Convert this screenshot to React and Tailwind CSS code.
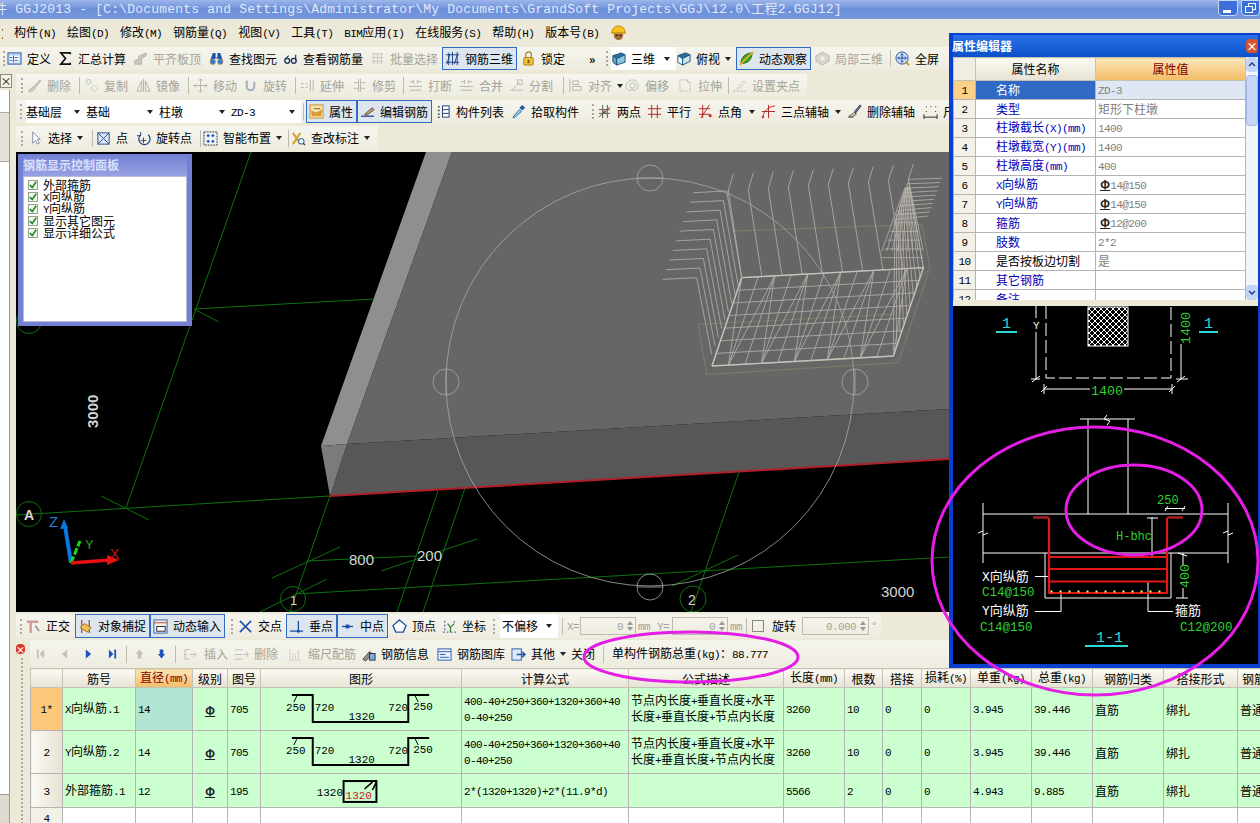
import React from "react";
import clsx from "clsx";

const MONO = "font-['Liberation_Mono','Noto_Sans_CJK_SC',monospace] text-[11px] tracking-[-0.6px]";

// half width latin like the bitmap font of the app
function T({ children }) {
  return String(children)
    .split(/([\x00-\x7f]+)/)
    .filter(Boolean)
    .map((part, i) =>
      /^[\x00-\x7f]+$/.test(part) ? <span key={i} className={MONO}>{part}</span> : <span key={i}>{part}</span>
    );
}

const ICONS = {
  table: <><rect x="1" y="2" width="14" height="12" fill="#bcd4f2" stroke="#2a5caa" /><rect x="3" y="5" width="10" height="7" fill="#fff" /><path d="M7 5v7M8 7h4M8 10h4M3 7h3M3 10h3" stroke="#2a5caa" /></>,
  sigma: <path d="M13 3.5V2H3l5 6-5 6h10v-1.5" fill="none" stroke="#111" strokeWidth="1.8" />,
  slab: <><path d="M2 14V10l4-1V6l8-4v3l-5 3v6z" fill="#c9c8c2" stroke="#b0afa8" /></>,
  binoc: <><path d="M4 2h3v5h2V2h3l3 9h-5V8H6v3H1z" fill="#1c4fa8" /><circle cx="4" cy="11.5" r="3" fill="#3a78d8" stroke="#d8a020" strokeWidth="0.6" /><circle cx="12" cy="11.5" r="3" fill="#3a78d8" stroke="#d8a020" strokeWidth="0.6" /></>,
  glasses: <><circle cx="4.5" cy="10.5" r="2.6" fill="none" stroke="#1a2f60" strokeWidth="1.4" /><circle cx="11.5" cy="10.5" r="2.6" fill="none" stroke="#1a2f60" strokeWidth="1.4" /><path d="M2 9L6 5M13.5 4v6" stroke="#1a2f60" strokeWidth="1.2" /></>,
  batch: <><path d="M2 3h12M2 7h12M2 11h12M4 3v11M8 3v11M12 3v11" stroke="#c8c6bc" /></>,
  cage: <><path d="M1 4h14M1 12h14M4 2v13M8 1v14M13 1v14M2 14L5 4M10 14l3-10" stroke="#1b3f86" fill="none" /></>,
  lock: <><path d="M5 7V4a3 3 0 016 0v3" fill="none" stroke="#a58020" strokeWidth="1.3" /><rect x="3" y="7" width="10" height="8" rx="1" fill="#f2c23c" stroke="#a58020" /><rect x="7" y="9.5" width="2" height="3.5" fill="#7a5a10" /></>,
  cube: <><path d="M2 5l9-3 4 2-9 4z" fill="#2f6f9f" stroke="#1d4f78" /><path d="M2 5l4 3v7l-4-3z" fill="#5fa4cc" stroke="#1d4f78" /><path d="M6 8l9-4v8l-9 3z" fill="#89c4e2" stroke="#1d4f78" /></>,
  cubeTop: <><path d="M2 5l8-3 5 2-8 4z" fill="#2f6f9f" stroke="#1d4f78" /><path d="M2 5l5 3v7l-5-3z" fill="#f4f9fc" stroke="#1d4f78" /><path d="M7 8l8-4v7l-8 4z" fill="#c9e4f3" stroke="#1d4f78" /></>,
  orbit: <><path d="M2 13c0-6 5-11 12-11 0 7-5 12-12 11z" fill="#3ea52e" stroke="#1f6b18" /><path d="M1 15C5 10 9 7 15 1" stroke="#e0b020" strokeWidth="1.8" /></>,
  local: <><path d="M8 1l7 4v6l-7 4-7-4V5z" fill="#d6d4cb" stroke="#bbb" /><circle cx="8" cy="8" r="2.5" fill="#efeee8" /></>,
  zoomAll: <><circle cx="7.5" cy="7.5" r="6.5" fill="#cfe0f6" stroke="#2a4f90" /><path d="M7.5 3v9M3 7.5h9M6 4.5l1.5-1.5L9 4.5M6 10.5L7.5 12 9 10.5M4.5 6L3 7.5 4.5 9M10.5 6L12 7.5 10.5 9" stroke="#1a48a0" fill="none" /><path d="M12 12l3 3" stroke="#c89020" strokeWidth="2" /></>,
  brush: <><path d="M1 15l2-1M2 13l5-4 2 2-5 4zM8 8l6-6 1 1-6 7z" fill="#cfcdc4" stroke="#b8b6ac" /></>,
  copy: <><circle cx="5" cy="4" r="2.5" fill="none" stroke="#bbb" /><circle cx="11" cy="11" r="3" fill="none" stroke="#bbb" strokeDasharray="2 1" /></>,
  mirror: <><path d="M1 14L6 3v11zM15 14L10 3v11z" fill="none" stroke="#b4b2a8" /><path d="M8 1v14" stroke="#b4b2a8" /></>,
  move: <path d="M8 1v14M1 8h14M8 1L6 3M8 1l2 2M8 15l-2-2M8 15l2-2M1 8l2-2M1 8l2 2M15 8l-2-2M15 8l-2 2" fill="none" stroke="#b4b2a8" />,
  rotate: <><path d="M4 4v5a4 4 0 008 0V4" fill="none" stroke="#a9b3c4" strokeWidth="2.4" /><path d="M2 5h4L4 2z" fill="#a9b3c4" /></>,
  extend: <path d="M1 6h3M1 10h3M6 6h2M6 10h2M11 2v12M14 2v12" fill="none" stroke="#b4b2a8" />,
  trim: <path d="M2 5h4M2 11h4M10 5h4M10 11h4M7 1v14M9 1v14" fill="none" stroke="#b4b2a8" />,
  breakIc: <path d="M2 4h4M10 4h4M6 2v4M10 2v4M1 9h14M2 13h12" fill="none" stroke="#b4b2a8" />,
  split: <><path d="M1 13h14M3 13l9-9" stroke="#bbb" /><rect x="9" y="2" width="5" height="5" fill="none" stroke="#bbb" /></>,
  align: <path d="M2 1v14M5 3h6v4H5zM5 9h9v4H5z" fill="none" stroke="#b4b2a8" />,
  offset: <><path d="M8 2a6 6 0 016 6c0 3-2 5-4 5H5c-2 0-4-2-4-4a7 7 0 017-7z" fill="none" stroke="#bbb" /><circle cx="8" cy="8" r="3" fill="none" stroke="#bbb" /></>,
  stretch: <path d="M2 2h8l3 3v9H2zM10 2v3h3" fill="none" stroke="#bbb" strokeDasharray="2 1" />,
  grip: <path d="M1 14h14M5 12l7-9 2 2-7 7" fill="none" stroke="#bbb" strokeDasharray="3 1" />,
  prop: <><rect x="1" y="1" width="14" height="14" fill="#f9e4b0" stroke="#c88d2e" /><path d="M2 7l6 2 6-3-1 7H3z" fill="#d59a34" /><path d="M5 5h7" stroke="#8a5a1a" /></>,
  edit: <><path d="M1 13h14" stroke="#1f3f7a" strokeWidth="1.3" /><path d="M5 11l8-7 2 2-8 6z" fill="#d9a868" stroke="#444" /></>,
  list: <><path d="M2 3h2M2 7h2M2 11h2M2 14h2" stroke="#555" strokeWidth="1.6" /><rect x="7" y="2" width="7" height="12" fill="#fff" stroke="#1d3d7a" /><path d="M7 6h7M7 10h7" stroke="#1d3d7a" /></>,
  pick: <><path d="M2 14l7-8 2 2-8 7z" fill="#a9d8f4" stroke="#1b5fa0" /><path d="M9 4l3-3 3 3-3 3z" fill="#1b5fa0" /></>,
  twoPt: <><path d="M2 6h12M2 10h12M6 1v14M11 1v14" fill="none" stroke="#555" /><path d="M2 14L14 3" stroke="#8a4a20" /><circle cx="8" cy="8.5" r="1.4" fill="#8a4a20" /></>,
  parallel: <path d="M1 5h14M1 11h14M5 1v14M11 1v14" stroke="#b02020" />,
  angle: <><path d="M1 5h12M1 11h12M5 1v14M12 1L3 15" stroke="#b02020" fill="none" /><circle cx="13" cy="12.5" r="1.6" fill="#d02020" /></>,
  threePt: <><path d="M2 14C3 7 8 3 15 2M1 8h14M8 1v14" fill="none" stroke="#b02020" /><circle cx="2" cy="14" r="1.2" fill="#d02020" /></>,
  delAxis: <><path d="M1 14h6M2 13l6-4 2 2-5 3z" fill="#e8d8a0" stroke="#555" /><path d="M8 8l6-7 1 1-6 8z" fill="#6f80b8" stroke="#334" /></>,
  dim: <path d="M1 14h14M1 11v5M15 11v5M3 3h1M8 3h1M13 3h1M3 8h1M13 8h1" stroke="#222" />,
  arrow: <path d="M5 1v12l3-3 2 4 2-1-2-4h3z" fill="#fff" stroke="#8088a0" />,
  pointBox: <><rect x="2" y="2" width="12" height="12" fill="#dfe6f4" stroke="#27498a" /><path d="M2 2l12 12M14 2L2 14" stroke="#27498a" /></>,
  rotPt: <><path d="M5 4a6 6 0 108 0" fill="none" stroke="#25408a" strokeWidth="1.4" /><path d="M5 1v4H1M8 7v6M5 10h6" stroke="#25408a" fill="none" /></>,
  smart: <><rect x="1" y="1" width="14" height="14" fill="#eef2f8" stroke="#333" strokeDasharray="2 1" /><path d="M4 5h3M5.5 3.5v3M9 5h3M10.5 3.5v3M4 11h3M5.5 9.5v3M9 11h3M10.5 9.5v3" stroke="#1a4fa0" strokeWidth="1.3" /></>,
  mark: <><path d="M2 2l8 12M10 2L2 14" stroke="#d8a020" strokeWidth="2" /><circle cx="11" cy="11" r="3" fill="#dff" stroke="#247" /><path d="M13 13l2 2" stroke="#444" strokeWidth="1.5" /></>,
  ortho: <><path d="M1 3h12M5 3v12" stroke="#d69a94" strokeWidth="2.6" /><path d="M10 7l4 6" stroke="#889" strokeWidth="1.6" /></>,
  snap: <><path d="M4 1v14M12 1v14" stroke="#c0392b" strokeWidth="1.3" /><path d="M2 9l5-4 7 4-4 5z" fill="#f2c050" stroke="#a07020" /></>,
  dyn: <><rect x="1" y="1" width="14" height="14" fill="#f4f2e8" stroke="#2a5caa" /><path d="M1 4h14" stroke="#c0392b" /><rect x="4" y="8" width="9" height="5" fill="#fff" stroke="#223" /></>,
  cross: <path d="M2 2l12 12M14 2L2 14" stroke="#1c4fa8" strokeWidth="1.6" />,
  perp: <><path d="M1 13h14M10 2v11" stroke="#1c4fa8" strokeWidth="1.4" /><circle cx="10" cy="13" r="1.6" fill="#1c4fa8" /></>,
  mid: <><path d="M2 8h12" stroke="#1c4fa8" strokeWidth="1.4" /><rect x="6" y="6" width="4" height="4" fill="#1c4fa8" /></>,
  vertex: <path d="M8 1l7 6-3 7H4L1 7z" fill="#fff" stroke="#1c4fa8" strokeWidth="1.4" />,
  coord: <><path d="M3 2v12M1 14h14M13 2v3" stroke="#1c4fa8" strokeDasharray="2 2" /><path d="M6 5l3 4 4-4M9 9v5" stroke="#2a7f30" strokeWidth="1.3" fill="none" /></>,
  insert: <path d="M1 3h5M1 8h2M1 13h5M1 3v10M6 8h6M10 5l3 3-3 3" fill="none" stroke="#bbb" />,
  delRow: <path d="M1 3h8M1 8h8M1 13h8M10 8h5M13 5l2 3-2 3" fill="none" stroke="#bbb" />,
  scale: <path d="M2 14V2M2 14h12M5 12V6M8 12V8M11 12V4" fill="none" stroke="#bbb" strokeDasharray="2 1" />,
  info: <><path d="M2 13l7-8 3 2-7 8z" fill="#9a8f7a" stroke="#444" /><rect x="9" y="7" width="6" height="7" fill="#7fa8dc" stroke="#234" /></>,
  lib: <><rect x="1" y="2" width="14" height="12" fill="#eaf1fb" stroke="#2a5caa" /><path d="M1 5h14M3 8h6M3 11h10" stroke="#2a5caa" /></>,
  other: <><rect x="1" y="2" width="10" height="12" fill="#dfe9f8" stroke="#2a5caa" /><path d="M6 8h9M12 5l3 3-3 3" fill="none" stroke="#1c4fa8" strokeWidth="1.5" /></>,
};

function Ic({ n, size = 15 }) {
  return (
    <svg viewBox="0 0 16 16" width={size} height={size} className="shrink-0">
      {ICONS[n]}
    </svg>
  );
}

function Caret({ cls = "text-[#222]" }) {
  return (
    <svg viewBox="0 0 6 4" width="6" height="4" className={clsx("shrink-0 fill-current", cls)}>
      <path d="M0 0h6L3 4z" />
    </svg>
  );
}

function Grip({ cls }) {
  return (
    <div className={clsx("flex shrink-0 items-center justify-center", cls)}>
      <div className="h-[15px] border-l-2 border-dotted border-[#aaa8a0]" />
    </div>
  );
}

function Sep({ cls }) {
  return (
    <div className={clsx("flex shrink-0 items-center justify-center", cls)}>
      <div className="h-[17px] w-px bg-[#bdbbae]" />
    </div>
  );
}

function Tool({ icon, label, cls, off, box, caret }) {
  return (
    <div
      className={clsx(
        "flex h-full shrink-0 items-center gap-[5px] whitespace-nowrap",
        cls,
        off ? "text-[#a5a39a]" : "text-black",
        box && "border border-[#316ac5] bg-[#dde5ef] pl-[2px]"
      )}
    >
      <Ic n={icon} />
      <span><T>{label}</T></span>
      {caret && (
        <span className="mr-[6px] ml-auto">
          <Caret />
        </span>
      )}
    </div>
  );
}

function Drop({ label, cls }) {
  return (
    <div className={clsx("flex h-full shrink-0 items-center bg-white", cls)}>
      <span><T>{label}</T></span>
      <span className="mr-[6px] ml-auto">
        <Caret />
      </span>
    </div>
  );
}

function Band({ cls, children }) {
  return (
    <div className={clsx("flex h-[23px] items-center overflow-hidden bg-gradient-to-b from-[#f6f5ee] to-[#eeecdf]", cls)}>
      {children}
    </div>
  );
}

function Spin({ value, cls }) {
  return (
    <div className={clsx("flex h-[18px] shrink-0 items-center justify-end border border-[#bdbbad] pr-[2px] text-[#a5a39a]", cls)}>
      <span className="mr-[4px]"><T>{value}</T></span>
      <div className="flex flex-col gap-[2px]">
        <svg viewBox="0 0 6 4" width="6" height="4" className="fill-[#999]"><path d="M0 4h6L3 0z" /></svg>
        <svg viewBox="0 0 6 4" width="6" height="4" className="fill-[#999]"><path d="M0 0h6L3 4z" /></svg>
      </div>
    </div>
  );
}

function Rebar() {
  return <span className="font-bold underline decoration-1 underline-offset-1 text-[#222]">Φ</span>;
}

// screenshot crop coords of the cage -> page coords
const z = (X, Y) => [480 + X / 3, 150 + Y / 3];
const lerp = (a, b, t) => [a[0] + (b[0] - a[0]) * t, a[1] + (b[1] - a[1]) * t];
const pts = (...list) => list.map((p) => z(p[0], p[1]).join(",")).join(" ");

function Cage() {
  const A = [696, 645], B = [1240, 615], C = [1330, 350], D = [785, 380];
  const lines = [];
  for (let i = 0; i <= 7; i++) {
    const t = i / 7;
    lines.push(pts(lerp(A, D, t), lerp(B, C, t)));
  }
  for (let i = 0; i <= 11; i++) {
    const t = i / 11;
    lines.push(pts(lerp(A, B, t), lerp(D, C, t)));
    if (i < 11) lines.push(pts(lerp(A, B, i % 2 ? t : t + 1 / 11), lerp(D, C, i % 2 ? t + 1 / 11 : t)));
  }
  for (let i = 0; i <= 9; i++) {
    const t = i / 9;
    lines.push(pts(lerp(D, C, t), lerp([745, 120], [1285, 85], t), lerp([760, 68], [1300, 40], t)));
    lines.push(pts(lerp([548, 385], [640, 125], t), lerp([650, 380], [740, 120], t), lerp([695, 610], [785, 380], t)));
    lines.push(pts(lerp([1345, 195], [1385, 82], t), lerp([1245, 205], [1285, 85], t), lerp([1240, 600], [1330, 350], t)));
  }
  // dense part in the far right corner
  for (let i = 0; i <= 8; i++) {
    const t = i / 8;
    lines.push(pts(lerp([1205, 300], [1330, 300], t), lerp([1275, 110], [1290, 110], t)));
    const y = 320 - 210 * t;
    lines.push(pts([1205 + 70 * t, y], [1330 - 40 * t, y]));
  }
  return (
    <g fill="none">
      <polyline points={pts([655, 520], [680, 670], [1255, 635], [1350, 350], [1325, 220], [760, 240])} stroke="#85816a" strokeWidth="0.8" />
      <polyline points={pts([655, 520], [1240, 490], [1350, 350])} stroke="#85816a" strokeWidth="0.8" />
      {lines.map((p, i) => (
        <polyline key={i} points={p} stroke="#b6b3aa" strokeWidth="0.8" />
      ))}
      <polyline points={pts(A, B, C, D, A)} stroke="#c4c1b8" strokeWidth="1.4" />
    </g>
  );
}

function Viewport() {
  const green = "#0f700f";
  const white = "#a8a8a8";
  return (
    <svg viewBox="16 151 933 460" className="block h-[460px] w-[933px] font-['Liberation_Sans',sans-serif]">
      <rect x="16" y="151" width="933" height="460" fill="#000" />
      <g stroke={green} fill="none">
        <path d="M251 151L126 507M16 514L330 495M194 308L373 298M194 308L219 321M101 495L149 519M330 495L290 611" />
        <path d="M438 490L397 611M465 487L423 611M307 560L417 555M272 577L340 546M381 570L477 538M295 593L949 556M260 611L327 578M739 471L691 611M672 585L738 554" />
        <circle cx="29" cy="513" r="12.5" />
        <circle cx="29" cy="320" r="12.5" />
        <circle cx="293" cy="598" r="12.5" />
        <circle cx="693" cy="598" r="13" />
      </g>
      <polygon points="426,151 452,151 347,443 321,445" fill="#8f8f8f" />
      <polygon points="452,151 949,151 949,408 347,443" fill="#666666" />
      <polygon points="347,443 949,408 949,458 330,495" fill="#575757" />
      <polygon points="321,445 347,443 330,495" fill="#7b7b7b" />
      <line x1="330" y1="495" x2="949" y2="458" stroke="#b02028" strokeWidth="2" />
      <Cage />
      <g fill="none" stroke={white} strokeWidth="0.8">
        <ellipse cx="650" cy="381" rx="204" ry="204" />
        <circle cx="650" cy="177" r="13" />
        <circle cx="650" cy="586" r="13" />
        <circle cx="446" cy="381" r="13" />
        <circle cx="855" cy="381" r="13" />
        <path d="M446 368v26M855 368v26M637 177h26M637 586h26" />
      </g>
      <g fill="#d4d4d4" fontSize="15">
        <text x="0" y="0" transform="translate(98 427) rotate(-90)" fontWeight="bold">3000</text>
        <text x="349" y="564">800</text>
        <text x="417" y="560">200</text>
        <text x="881" y="596">3000</text>
        <text x="482" y="622">3000</text>
        <text x="24" y="519" fontSize="14" fontWeight="bold">A</text>
        <text x="290" y="604" fontSize="13">1</text>
        <text x="688" y="604" fontSize="14">2</text>
      </g>
      <path d="M71 562L65 525" stroke="#0a78e0" strokeWidth="4" />
      <path d="M60 528l4-10 4 9z" fill="#0a78e0" />
      <path d="M71 562L80 540" stroke="#18d818" strokeWidth="3" strokeDasharray="7 2" />
      <path d="M71 562L110 559" stroke="#e81010" strokeWidth="3.5" />
      <path d="M107 554l12 5-12 5z" fill="#e81010" />
      <text x="49" y="526" fill="#2a78d8" fontSize="15">Z</text>
      <text x="85" y="548" fill="#20a020" fontSize="13">Y</text>
      <text x="110" y="558" fill="#c01818" fontSize="14">X</text>
    </svg>
  );
}

function ControlPanel() {
  const items = ["外部箍筋", "X向纵筋", "Y向纵筋", "显示其它图元", "显示详细公式"];
  return (
    <div className="absolute top-[2px] left-[2px] flex h-[172px] w-[174px] flex-col border-x-[5px] border-b-[4px] border-[#7480d4] bg-[#7480d4]">
      <div className="flex h-[22px] shrink-0 items-center bg-gradient-to-b from-[#7480d4] to-[#97a2e2] text-[12px] font-bold text-[#dbe0fa]">
        钢筋显示控制面板
      </div>
      <div className="flex-1 border border-[#b8bed8] bg-white pt-[2px] pl-[4px]">
        {items.map((item) => (
          <div key={item} className="flex h-[12px] items-center gap-[5px] text-[12px] leading-none">
            <span className="flex h-[10px] w-[10px] items-center justify-center border border-[#9aa090] bg-[#f4f7ee]">
              <svg viewBox="0 0 10 10" width="8" height="8"><path d="M1 5l3 3 5-7" fill="none" stroke="#1f8a1f" strokeWidth="2" /></svg>
            </span>
            <span><T>{item}</T></span>
          </div>
        ))}
      </div>
    </div>
  );
}

const PROPS = [
  ["名称", "ZD-3"],
  ["类型", "矩形下柱墩"],
  ["柱墩截长(X)(mm)", "1400"],
  ["柱墩截宽(Y)(mm)", "1400"],
  ["柱墩高度(mm)", "400"],
  ["X向纵筋", "14@150", true],
  ["Y向纵筋", "14@150", true],
  ["箍筋", "12@200", true],
  ["肢数", "2*2"],
  ["是否按板边切割", "是"],
  ["其它钢筋", ""],
  ["备注", ""],
];

function PropTable() {
  return (
    <div className="flex h-[243px] overflow-hidden bg-white">
      <table className="w-[292px] shrink-0 table-fixed border-collapse self-start text-[12px]">
        <colgroup>
          <col className="w-[22px]" />
          <col className="w-[120px]" />
          <col className="w-[150px]" />
        </colgroup>
        <thead>
          <tr className="h-[23px]">
            <th className="border border-[#c4c2b6] bg-[#f0eee2] font-normal" />
            <th className="border border-[#c4c2b6] bg-gradient-to-b from-[#fbfaf3] to-[#e6e3d3] font-normal text-black">属性名称</th>
            <th className="border border-[#c4c2b6] bg-gradient-to-b from-[#fbe6b8] to-[#f3bd66] font-normal text-[#800000]">属性值</th>
          </tr>
        </thead>
        <tbody>
          {PROPS.map(([name, value, bar], i) => (
            <tr key={name} className="h-[19px]">
              <td className={clsx("border border-[#b4b4b4] text-center", i === 0 ? "bg-[#fbd08a]" : "bg-[#f3f1e7]")}><T>{i + 1}</T></td>
              <td className={clsx(
                "truncate border border-[#b4b4b4] pl-[20px]",
                i === 0 ? "bg-[#316ac5] text-white" : i === 9 ? "text-black" : "text-[#0000b8]"
              )}><T>{name}</T></td>
              <td className={clsx("border border-[#b4b4b4] pl-[2px] text-[#808080]", i === 0 && "bg-[#dfe7f4]", bar && "pl-[4px]")}>
                {bar && <Rebar />}
                <T>{value}</T>
              </td>
            </tr>
          ))}
        </tbody>
      </table>
      <div className="flex w-[13px] flex-col bg-[#f1f4fc]">
        <div className="flex h-[15px] items-center justify-center rounded-sm bg-[#c3d4fb]">
          <svg viewBox="0 0 8 5" width="8" height="5"><path d="M1 4l3-3 3 3" fill="none" stroke="#25408a" strokeWidth="1.5" /></svg>
        </div>
        <div className="mt-[3px] h-[51px] rounded-sm border border-[#a4b8e8] bg-[#c6d6fb]" />
        <div className="mt-auto flex h-[15px] items-center justify-center rounded-sm bg-[#c3d4fb]">
          <svg viewBox="0 0 8 5" width="8" height="5"><path d="M1 1l3 3 3-3" fill="none" stroke="#25408a" strokeWidth="1.5" /></svg>
        </div>
      </div>
    </div>
  );
}

function Section() {
  const G = "#30d030", C = "#30d8d8", W = "#ffffff";
  return (
    <svg viewBox="953 306 305 358" className="block h-[358px] w-[305px] font-['Liberation_Mono','Noto_Sans_CJK_SC',monospace]">
      <defs>
        <pattern id="hatch" width="6" height="6" patternUnits="userSpaceOnUse">
          <path d="M0 0L6 6M6 0L0 6" stroke="#fff" strokeWidth="1" />
        </pattern>
      </defs>
      <rect x="953" y="306" width="305" height="358" fill="#000" />
      <g fill="none" stroke={W}>
        <path d="M1036 306V318M1036 332V379M1031 379h9M1032 382l8-6" />
        <path d="M1046 306V378H1171V306" strokeDasharray="13 4" />
        <rect x="1088" y="307" width="40" height="39" fill="url(#hatch)" />
        <path d="M1181 344V379M1176 379h12M1177 382l8-6" />
        <path d="M1044 389H1090M1124 389H1172M1044 384v10M1172 384v10M1041 392l6-6M1169 392l6-6" />
        <path d="M1088 514V419M1128 514V419M1080 419H1135M1107 415l-3 4 6 2-3 4" />
        <path d="M983 514H1228M983 553H1228M983 503V531M983 535V563M1228 503V531M1228 535V563M978 533l5-2 0 4 5-2M1223 533l5-2 0 4 5-2" />
        <path d="M1045 553V598H1171V553" />
        <path d="M1035 576.5H1049M1035 611.5H1061V593M1148 582V611.5H1173" />
        <path d="M1165 508.5H1185M1165 511l3-5M1182 511l3-5M1152 517V556M1147 518H1158M1183 553V565M1183 588V598M1176 598H1188M1178 553l9 3" />
      </g>
      <g fill="none" stroke="#e01818" strokeWidth="2">
        <path d="M1049 518V593H1167V518" strokeWidth="2.2" />
        <path d="M1049 557H1167M1049 569H1167M1049 581.5H1167" />
        <path d="M1033 517.5H1049M1167 517.5H1183" stroke="#a82020" strokeWidth="2.5" />
      </g>
      {Array.from({ length: 13 }, (_, i) => (
        <rect key={i} x={1050.5 + i * 9} y="590.5" width="2" height="2" fill="#f8f060" />
      ))}
      <g fontSize="13.3">
        <text x="1002" y="328" fill={C} fontSize="15">1</text>
        <text x="1204" y="328" fill={C} fontSize="15">1</text>
        <rect x="996" y="331" width="21" height="2" fill={C} />
        <rect x="1199" y="331" width="19" height="2" fill={C} />
        <text x="1033" y="329" fill={W} fontSize="11">Y</text>
        <text x="0" y="0" fill={G} transform="translate(1190 344) rotate(-90)">1400</text>
        <text x="1091" y="395" fill={G}>1400</text>
        <text x="1157" y="504" fill={G} fontSize="12">250</text>
        <text x="1116" y="540" fill={G} fontSize="12">H-bhc</text>
        <text x="0" y="0" fill={G} transform="translate(1189 588) rotate(-90)">400</text>
        <text x="982" y="596" fill={G} fontSize="12.5">C14@150</text>
        <text x="980" y="631" fill={G} fontSize="12.5">C14@150</text>
        <text x="1180" y="631" fill={G} fontSize="12.5">C12@200</text>
        <text x="1096" y="642" fill={C} fontSize="15">1-1</text>
        <rect x="1085" y="645" width="43" height="2" fill={C} />
        <text x="982" y="581" fill={W} fontSize="13">X向纵筋</text>
        <text x="982" y="615" fill={W} fontSize="13">Y向纵筋</text>
        <text x="1175" y="615" fill={W} fontSize="13">箍筋</text>
      </g>
    </svg>
  );
}

function PropertyEditor() {
  return (
    <div className="absolute top-[33px] left-[949px] z-10 flex h-[635px] w-[311px] flex-col border-t-2 border-r-2 border-b-4 border-l-4 border-[#0a3fd0] bg-[#ece9d8]">
      <div className="flex h-[22px] shrink-0 items-center justify-between bg-gradient-to-b from-[#2a72e8] to-[#0a50c8] text-[12px] font-bold text-white">
        <span className="-ml-px">属性编辑器</span>
        <span className="flex h-[14px] w-[12px] items-center justify-center rounded-sm bg-[#d8542c] text-[11px] leading-none text-white">×</span>
      </div>
      <PropTable />
      <div className="h-[6px] shrink-0 bg-[#ece9d8]" />
      <Section />
    </div>
  );
}

function Shape() {
  return (
    <svg viewBox="0 0 201 42" className="block h-[42px] w-full font-['Liberation_Mono',monospace]">
      <path d="M31 7H52V34H148V7H169" fill="none" stroke="#000" strokeWidth="2" />
      <path d="M36 8l-3 6M155 8l3 6" stroke="#000" fill="none" />
      <g fontSize="11" fill="#000">
        <text x="25" y="23">250</text>
        <text x="54" y="23">720</text>
        <text x="88" y="32">1320</text>
        <text x="128" y="23">720</text>
        <text x="153" y="22">250</text>
      </g>
    </svg>
  );
}

function Stirrup() {
  return (
    <svg viewBox="0 0 201 33" className="block h-[33px] w-full font-['Liberation_Mono',monospace]">
      <rect x="83" y="7" width="33" height="21" fill="none" stroke="#000" strokeWidth="2" />
      <path d="M104 15l8-7M112 16l4-8" stroke="#000" strokeWidth="1.6" fill="none" />
      <text x="56" y="22" fontSize="11" fill="#000">1320</text>
      <text x="85" y="25" fontSize="11" fill="#c01818">1320</text>
    </svg>
  );
}

const FORMULA = ["400-40+250+360+1320+360+40", "0-40+250"];
const DESC = ["节点内长度+垂直长度+水平", "长度+垂直长度+节点内长度"];

const BARS = [
  { no: "1*", name: "X向纵筋.1", d: "14", code: "705", shape: <Shape />, formula: FORMULA, desc: DESC, len: "3260", n: "10", unit: "3.945", total: "39.446", h: "h-[43px]" },
  { no: "2", name: "Y向纵筋.2", d: "14", code: "705", shape: <Shape />, formula: FORMULA, desc: DESC, len: "3260", n: "10", unit: "3.945", total: "39.446", h: "h-[42px]" },
  { no: "3", name: "外部箍筋.1", d: "12", code: "195", shape: <Stirrup />, formula: ["2*(1320+1320)+2*(11.9*d)"], desc: [], len: "5566", n: "2", unit: "4.943", total: "9.885", h: "h-[33px]" },
];

const HEADS = ["", "筋号", "直径(mm)", "级别", "图号", "图形", "计算公式", "公式描述", "长度(mm)", "根数", "搭接", "损耗(%)", "单重(kg)", "总重(kg)", "钢筋归类", "搭接形式"];

function BarTable() {
  const cell = "border border-[#b4b4b4] px-[2px]";
  return (
    <div className="h-[155px] overflow-hidden">
      <table className="w-[1270px] table-fixed border-collapse text-[12px] leading-[13px]">
        <colgroup>
          <col className="w-[32px]" /><col className="w-[73px]" /><col className="w-[57px]" /><col className="w-[35px]" />
          <col className="w-[33px]" /><col className="w-[201px]" /><col className="w-[167px]" /><col className="w-[155px]" />
          <col className="w-[61px]" /><col className="w-[38px]" /><col className="w-[39px]" /><col className="w-[49px]" />
          <col className="w-[61px]" /><col className="w-[61px]" /><col className="w-[71px]" /><col className="w-[74px]" />
          <col className="w-[63px]" />
        </colgroup>
        <thead>
          <tr className="h-[19px]">
            {HEADS.map((h, i) => (
              <th
                key={i}
                className={clsx(
                  "border border-[#c4c2b6] text-center font-normal whitespace-nowrap",
                  i === 2 ? "bg-gradient-to-b from-[#fbe6b8] to-[#f3bd66] text-[#800000]" : "bg-gradient-to-b from-[#fbfaf3] to-[#e6e3d3] text-black"
                )}
              >
                <T>{h}</T>
              </th>
            ))}
            <th className="border border-[#c4c2b6] bg-gradient-to-b from-[#fbfaf3] to-[#e6e3d3] pl-[4px] text-left font-normal whitespace-nowrap">钢筋</th>
          </tr>
        </thead>
        <tbody>
          {BARS.map((b, i) => (
            <tr key={b.no} className={clsx(b.h, "bg-[#ccffd0]")}>
              <td className={clsx(cell, "text-center", i === 0 ? "bg-[#fbc87a]" : "bg-gradient-to-r from-[#fbfaf3] to-[#e6e3d3]")}><T>{b.no}</T></td>
              <td className={clsx(cell, "whitespace-nowrap")}><T>{b.name}</T></td>
              <td className={clsx(cell, "border-l-[1.5px] border-l-black", i === 0 && "bg-[#b2e6d2]")}><T>{b.d}</T></td>
              <td className={clsx(cell, "text-center")}><Rebar /></td>
              <td className={cell}><T>{b.code}</T></td>
              <td className="border border-[#b4b4b4] p-0">{b.shape}</td>
              <td className={cell}>{b.formula.map((l) => <div key={l}><T>{l}</T></div>)}</td>
              <td className={clsx(cell, "leading-[13px] whitespace-nowrap")}>{b.desc.map((l) => <div key={l}><T>{l}</T></div>)}</td>
              <td className={cell}><T>{b.len}</T></td>
              <td className={cell}><T>{b.n}</T></td>
              <td className={cell}><T>0</T></td>
              <td className={cell}><T>0</T></td>
              <td className={cell}><T>{b.unit}</T></td>
              <td className={cell}><T>{b.total}</T></td>
              <td className={cell}>直筋</td>
              <td className={cell}>绑扎</td>
              <td className={clsx(cell, "whitespace-nowrap")}>普通</td>
            </tr>
          ))}
          <tr className="h-[20px] bg-white">
            <td className={clsx(cell, "bg-[#f3f1e7] text-center")}><T>4</T></td>
            <td className={cell} />
            <td className={clsx(cell, "border-l-[1.5px] border-l-black")} />
            {Array.from({ length: 14 }, (_, i) => <td key={i} className={cell} />)}
          </tr>
        </tbody>
      </table>
    </div>
  );
}

function NavBtn({ d, cls }) {
  return (
    <svg viewBox="0 0 10 12" width="9" height="12" className={clsx("shrink-0", cls)}>
      <path d={d} />
    </svg>
  );
}

function Helmet() {
  return (
    <svg viewBox="0 0 18 18" width="17" height="17" className="shrink-0">
      <circle cx="9" cy="12" r="5" fill="#a56a3a" />
      <path d="M2 9a7 7 0 0114 0z" fill="#f6c21c" stroke="#b88a10" />
      <path d="M1 9.5h16" stroke="#d8a010" strokeWidth="1.5" />
      <circle cx="7" cy="12" r="1" fill="#222" />
      <circle cx="11" cy="12" r="1" fill="#222" />
    </svg>
  );
}

export default function App() {
  const menus = ["构件(N)", "绘图(D)", "修改(M)", "钢筋量(Q)", "视图(V)", "工具(T)", "BIM应用(I)", "在线服务(S)", "帮助(H)", "版本号(B)"];
  return (
    <div className="relative h-[823px] w-[1260px] overflow-hidden bg-[#ece9d8] font-['Noto_Sans_CJK_SC','Liberation_Sans',sans-serif] text-[12px] leading-none text-black">
      {/* title bar */}
      <div className="flex h-[19px] items-center overflow-hidden bg-gradient-to-b from-[#9db6ea] via-[#6b8fd9] to-[#7698de]">
        <div className="-ml-[6px] flex-1 font-['Liberation_Mono','Noto_Sans_CJK_SC',monospace] text-[13px] tracking-[0.2px] whitespace-pre text-[#e3e9f7]">
          件 GGJ2013 - [C:\Documents and Settings\Administrator\My Documents\GrandSoft Projects\GGJ\12.0\工程2.GGJ12]
        </div>
        <div className="flex gap-[3px] self-start">
          <div className="relative h-[16px] w-[20px] rounded-b-sm border border-[#c8d6f4] bg-[#3d6fd8]">
            <div className="absolute bottom-[2px] left-[4px] h-[3px] w-[8px] bg-white" />
          </div>
          <div className="relative h-[16px] w-[19px] rounded-b-sm border border-[#c8d6f4] bg-[#3d6fd8]">
            <div className="absolute top-[2px] left-[6px] h-[7px] w-[8px] border border-white" />
            <div className="absolute top-[5px] left-[3px] h-[7px] w-[8px] border border-white bg-[#3d6fd8]" />
          </div>
        </div>
      </div>

      {/* menu bar */}
      <div className="flex h-[27px] items-center gap-[11px] whitespace-nowrap">
        <span className="w-[3px] overflow-hidden"><T>)</T></span>
        {menus.map((m) => (
          <span key={m}><T>{m}</T></span>
        ))}
        <Helmet />
      </div>

      {/* main toolbar */}
      <Band cls="mt-px mb-[2px] h-[22px] w-[949px]">
        <Grip cls="w-[7px]" />
        <Tool icon="table" label="定义" cls="w-[51px]" />
        <Tool icon="sigma" label="汇总计算" cls="w-[75px]" />
        <Tool icon="slab" label="平齐板顶" cls="w-[76px]" off />
        <Tool icon="binoc" label="查找图元" cls="w-[74px]" />
        <Tool icon="glasses" label="查看钢筋量" cls="w-[87px]" />
        <Tool icon="batch" label="批量选择" cls="w-[72px]" off />
        <Tool icon="cage" label="钢筋三维" cls="w-[75px]" box />
        <div className="w-[4px] shrink-0" />
        <Tool icon="lock" label="锁定" cls="w-[68px]" />
        <div className="w-[14px] shrink-0 text-[12px] font-bold">»</div>
        <Grip cls="w-[8px]" />
        <Tool icon="cube" label="三维" cls="w-[65px] bg-white" caret />
        <Tool icon="cubeTop" label="俯视" cls="w-[60px]" caret />
        <Tool icon="orbit" label="动态观察" cls="w-[75px]" box />
        <div className="w-[4px] shrink-0" />
        <Tool icon="local" label="局部三维" cls="w-[70px]" off />
        <Sep cls="w-[10px]" />
        <Tool icon="zoomAll" label="全屏" cls="w-[54px]" />
      </Band>

      <div className="flex h-[752px]">
        {/* left strip of the collapsed panel */}
        <div className="w-[16px] shrink-0">
          <div className="mt-[2px] flex h-[14px] w-[12px] items-center justify-center border border-[#8a8a80] bg-[#f4f2e8] text-[11px]">×</div>
          <div className="mt-[2px] flex h-[704px] w-[10px] flex-col border-r border-[#9c9a90] bg-white">
            <div className="mt-[22px] h-[50px] border-y border-[#aaa] bg-[#e4e2d8]" />
          </div>
          <div className="h-[30px] w-[10px] border-t border-r border-[#9c9a90] bg-[#dddbd0]" />
        </div>

        <div className="flex w-[1244px] flex-col">
          {/* edit toolbar */}
          <Band cls="mt-[2px] w-[791px]">
            <Grip cls="w-[11px]" />
            <Tool icon="brush" label="删除" cls="w-[48px]" off />
            <Sep cls="w-[9px]" />
            <Tool icon="copy" label="复制" cls="w-[52px]" off />
            <Tool icon="mirror" label="镜像" cls="w-[47px]" off />
            <Sep cls="w-[10px]" />
            <Tool icon="move" label="移动" cls="w-[50px]" off />
            <Tool icon="rotate" label="旋转" cls="w-[47px]" off />
            <Sep cls="w-[10px]" />
            <Tool icon="extend" label="延伸" cls="w-[52px]" off />
            <Tool icon="trim" label="修剪" cls="w-[47px]" off />
            <Sep cls="w-[9px]" />
            <Tool icon="breakIc" label="打断" cls="w-[51px]" off />
            <Tool icon="breakIc" label="合并" cls="w-[50px]" off />
            <Tool icon="split" label="分割" cls="w-[49px]" off />
            <Sep cls="w-[10px]" />
            <Tool icon="align" label="对齐" cls="w-[57px]" off caret />
            <Tool icon="offset" label="偏移" cls="w-[53px]" off />
            <Tool icon="stretch" label="拉伸" cls="w-[47px]" off />
            <Sep cls="w-[7px]" />
            <Tool icon="grip" label="设置夹点" cls="w-[75px]" off />
          </Band>

          {/* component selectors */}
          <Band cls="mt-[3px] w-[933px]">
            <Grip cls="w-[10px]" />
            <Drop label="基础层" cls="w-[60px]" />
            <Drop label="基础" cls="w-[73px]" />
            <Drop label="柱墩" cls="w-[72px]" />
            <Drop label="ZD-3" cls="w-[70px]" />
            <Sep cls="w-[5px]" />
            <Tool icon="prop" label="属性" cls="w-[51px]" box />
            <Tool icon="edit" label="编辑钢筋" cls="w-[75px]" box />
            <div className="w-[4px] shrink-0" />
            <Tool icon="list" label="构件列表" cls="w-[75px]" />
            <Tool icon="pick" label="拾取构件" cls="w-[78px]" />
            <Grip cls="w-[8px]" />
            <Tool icon="twoPt" label="两点" cls="w-[50px]" />
            <Tool icon="parallel" label="平行" cls="w-[51px]" />
            <Tool icon="angle" label="点角" cls="w-[63px]" caret />
            <Tool icon="threePt" label="三点辅轴" cls="w-[86px]" caret />
            <Tool icon="delAxis" label="删除辅轴" cls="w-[76px]" />
            <Tool icon="dim" label="尺寸标注" cls="w-[60px] overflow-hidden" />
          </Band>

          {/* placement toolbar */}
          <Band cls="mt-[3px] mb-[2px] h-[24px] w-[362px]">
            <Grip cls="w-[11px]" />
            <Tool icon="arrow" label="选择" cls="ml-px w-[61px]" caret />
            <Sep cls="w-[7px]" />
            <Tool icon="pointBox" label="点" cls="w-[40px]" />
            <Tool icon="rotPt" label="旋转点" cls="w-[61px]" />
            <Sep cls="w-[6px]" />
            <Tool icon="smart" label="智能布置" cls="w-[82px]" caret />
            <Sep cls="w-[6px]" />
            <Tool icon="mark" label="查改标注" cls="w-[85px]" caret />
          </Band>

          {/* 3d view */}
          <div className="relative h-[460px] w-[933px] shrink-0">
            <Viewport />
            <ControlPanel />
          </div>

          {/* snap toolbar */}
          <Band cls="mt-[2px] mb-[2px] h-[24px] w-[865px]">
            <Grip cls="w-[10px]" />
            <Tool icon="ortho" label="正交" cls="w-[49px]" />
            <Tool icon="snap" label="对象捕捉" cls="w-[75px]" box />
            <Tool icon="dyn" label="动态输入" cls="w-[75px]" box />
            <Grip cls="w-[13px]" />
            <Tool icon="cross" label="交点" cls="w-[48px]" />
            <Tool icon="perp" label="垂点" cls="w-[51px]" box />
            <Tool icon="mid" label="中点" cls="w-[51px]" box />
            <div className="w-[4px] shrink-0" />
            <Tool icon="vertex" label="顶点" cls="w-[50px]" />
            <Tool icon="coord" label="坐标" cls="w-[46px]" />
            <Grip cls="w-[12px]" />
            <Drop label="不偏移" cls="w-[58px] pl-[2px]" />
            <Sep cls="w-[9px]" />
            <span className="w-[13px] shrink-0 text-[#a5a39a]"><T>X=</T></span>
            <Spin value="0" cls="w-[56px]" />
            <span className="ml-[2px] w-[19px] shrink-0 text-[#a5a39a]"><T>mm</T></span>
            <span className="w-[15px] shrink-0 text-[#a5a39a]"><T>Y=</T></span>
            <Spin value="0" cls="w-[56px]" />
            <span className="ml-[2px] w-[14px] shrink-0 text-[#a5a39a]"><T>mm</T></span>
            <Sep cls="w-[5px]" />
            <div className="ml-[3px] h-[12px] w-[12px] shrink-0 border border-[#888]" />
            <span className="ml-[8px] shrink-0">旋转</span>
            <Spin value="0.000" cls="ml-[6px] w-[67px]" />
            <span className="ml-[3px] shrink-0 text-[#a5a39a]">°</span>
          </Band>

          {/* rebar grid */}
          <div className="flex flex-1">
            <div className="flex w-[14px] shrink-0 flex-col items-center">
              <div className="mt-[4px] ml-[-5px] flex h-[10px] w-[9px] items-center justify-center rounded-sm bg-[#d83a2a] text-[9px] font-bold text-white">×</div>
              <div className="mt-[4px] ml-[-2px] flex-1 border-l-2 border-dotted border-[#aaa8a0]" />
            </div>
            <div className="flex min-w-0 flex-1 flex-col">
              <div className="flex h-[28px] w-[919px] shrink-0 items-center bg-gradient-to-b from-[#f6f5ee] to-[#eeecdf]">
                <NavBtn d="M1 1h2v10H1zM9 1v10L4 6z" cls="ml-[6px] fill-[#c4c2b8]" />
                <NavBtn d="M8 1v10L2 6z" cls="ml-[15px] fill-[#c4c2b8]" />
                <NavBtn d="M2 1v10l6-5z" cls="ml-[15px] fill-[#1c52c0]" />
                <NavBtn d="M1 1v10l5-5zM7 1h2v10H7z" cls="ml-[15px] fill-[#1c52c0]" />
                <Sep cls="w-[18px]" />
                <NavBtn d="M5 1l4 5H7v5H3V6H1z" cls="fill-[#c4c2b8]" />
                <NavBtn d="M5 11L1 6h2V1h4v5h2z" cls="ml-[13px] fill-[#1c52c0]" />
                <Sep cls="w-[18px]" />
                <Tool icon="insert" label="插入" cls="w-[50px]" off />
                <Tool icon="delRow" label="删除" cls="w-[54px]" off />
                <Tool icon="scale" label="缩尺配筋" cls="w-[73px]" off />
                <Tool icon="info" label="钢筋信息" cls="w-[76px]" />
                <Tool icon="lib" label="钢筋图库" cls="w-[74px]" />
                <Tool icon="other" label="其他" cls="w-[60px]" caret />
                <span className="shrink-0">关闭</span>
                <Sep cls="w-[17px]" />
                <span className="shrink-0"><T>单构件钢筋总重(kg)：88.777</T></span>
              </div>
              <BarTable />
            </div>
          </div>
        </div>
      </div>

      <PropertyEditor />

      {/* hand drawn marks on top of the screenshot */}
      <svg viewBox="0 0 1260 823" className="pointer-events-none absolute inset-0 z-20 h-[823px] w-[1260px]">
        <g fill="none" stroke="#e41ee4" strokeWidth="3">
          <ellipse cx="1095" cy="561" rx="163" ry="134" />
          <ellipse cx="1134" cy="510" rx="68" ry="45" />
          <ellipse cx="691" cy="657" rx="107" ry="25" />
        </g>
      </svg>
    </div>
  );
}
